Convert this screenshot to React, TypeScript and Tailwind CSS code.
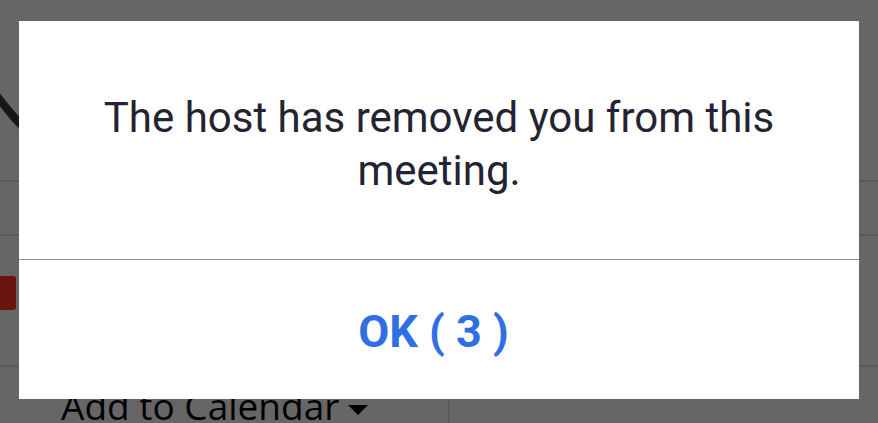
export default function App() {
  return (
    <div className="relative h-[423px] w-[878px] overflow-hidden bg-[#666666] font-['Roboto',sans-serif]">
      {/* page behind the overlay (already dimmed) */}
      <div className="flex h-full flex-col">
        <div className="h-[180px] shrink-0 pt-[90px]">
          <svg width="40" height="50" viewBox="0 0 40 50">
            <path d="M-4 5 C 8 20, 18 34, 30 42" stroke="#161616" strokeWidth="8" fill="none" />
          </svg>
        </div>
        <div className="h-[2px] shrink-0 bg-[#5a5a5a]" />
        <div className="h-[52px] shrink-0" />
        <div className="h-[2px] shrink-0 bg-[#5a5a5a]" />
        <div className="h-[129px] shrink-0 pt-[40px]">
          <div className="h-[34px] w-[16px] rounded-r-[3px] bg-[#6a1410]" />
        </div>
        <div className="h-[2px] shrink-0 bg-[#5a5a5a]" />
        <div className="flex min-h-0 flex-1">
          <div className="flex w-[448px] items-start gap-[9px] pl-[61px] pt-[14px] font-['Open_Sans',sans-serif] text-[37px] leading-[50px] text-black">
            <span className="whitespace-nowrap">Add to Calendar</span>
            <svg className="mt-[24px] shrink-0" width="20" height="10" viewBox="0 0 20 10">
              <path d="M0 0 H20 L10 10 Z" fill="#000" />
            </svg>
          </div>
          <div className="w-[2px] bg-[#5a5a5a]" />
        </div>
      </div>

      {/* overlay + dialog */}
      <div className="absolute inset-0 pl-[19px] pt-[21px]">
        <div className="flex h-[378px] w-[840px] flex-col bg-white">
          <div className="flex h-[238px] justify-center px-[40px] pt-[70px] text-center text-[42px] leading-[53px] text-[#232333]">
            The host has removed you from this meeting.
          </div>
          <div className="h-px bg-[#8e8e8e]" />
          <div className="flex flex-1 justify-center whitespace-pre pt-[49px] text-[45px] font-bold leading-[45px] text-[#2f6fe3]">
            {"OK ( 3 ) "}
          </div>
        </div>
      </div>
    </div>
  );
}
